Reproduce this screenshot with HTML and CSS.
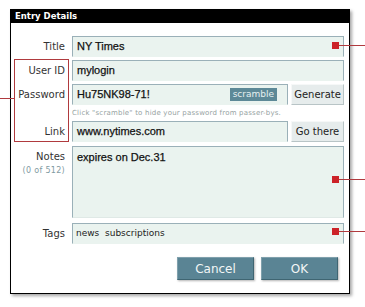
FILE: index.html
```html
<!DOCTYPE html>
<html lang="en">
<head>
    <meta charset="UTF-8">
    <title>Entry Details</title>
    <link rel="stylesheet" href="styles.css">
</head>
<body>
    <div class="stage">
        <div class="dialog">
            <div class="titlebar">Entry Details</div>
            <div class="form">
                <div class="row">
                    <label>Title</label>
                    <div class="field strong">NY Times</div>
                </div>
                <div class="row">
                    <label>User ID</label>
                    <div class="field strong">mylogin</div>
                </div>
                <div class="row">
                    <label>Password</label>
                    <div class="field strong pass">
                        <span>Hu75NK98-71!</span>
                        <span class="scramble">scramble</span>
                    </div>
                    <button class="small-btn">Generate</button>
                </div>
                <div class="hint">Click "scramble" to hide your password from passer-bys.</div>
                <div class="row link-row">
                    <label>Link</label>
                    <div class="field strong">www.nytimes.com</div>
                    <button class="small-btn">Go there</button>
                </div>
                <div class="row notes-row">
                    <label>Notes<small>(0 of 512)</small></label>
                    <div class="field strong notes">expires on Dec.31</div>
                </div>
                <div class="row tags-row">
                    <label>Tags</label>
                    <div class="field tags">news &nbsp;subscriptions</div>
                </div>
                <div class="actions">
                    <button class="big-btn">Cancel</button>
                    <button class="big-btn">OK</button>
                </div>
            </div>
        </div>

        <!-- anotaciones rojas -->
        <div class="bracket"></div>
        <div class="bracket-line"></div>
        <div class="marker" style="top: 42px"></div>
        <div class="marker" style="top: 176px"></div>
        <div class="marker" style="top: 228px"></div>
    </div>
</body>
</html>
```

FILE: styles.css
```css
body {
    margin: 0;
    padding: 0;
    background-color: #ffffff;
    font-family: "Liberation Sans", Arial, sans-serif;
}

.stage {
    position: relative;
    width: 365px;
    height: 307px;
    overflow: hidden;
    padding-top: 9px;
    box-sizing: border-box;
}

.dialog {
    margin-left: 10px;
    width: 340px;
    border: 1px solid #000;
    border-top: none;
    box-sizing: border-box;
    background-color: #fff;
    box-shadow: 2px 2px 3px rgba(0, 0, 0, 0.35);
}

.titlebar {
    background-color: #000;
    color: #fff;
    font-family: "DejaVu Sans", Verdana, sans-serif;
    font-weight: bold;
    font-size: 8.5px;
    height: 14px;
    line-height: 14px;
    padding-left: 4px;
}

.form {
    padding: 13px 5px 13px 0;
}

.row {
    display: flex;
    gap: 3px;
    height: 21px;
    margin-bottom: 3px;
}

.row label {
    width: 54px;
    margin-right: 4px;
    text-align: right;
    font-family: "DejaVu Sans", Verdana, sans-serif;
    font-size: 10px;
    color: #333;
    line-height: 21px;
    flex-shrink: 0;
}

.field {
    flex: 1;
    background-color: #eaf3ef;
    border: 1px solid #9ab0b8;
    border-bottom-color: #eaf3ef;
    box-sizing: border-box;
    padding: 0 4px;
    font-size: 11px;
    line-height: 19px;
    color: #222;
    white-space: nowrap;
}

/* texto del usuario algo mas oscuro */
.strong {
    color: #111;
    -webkit-text-stroke: 0.25px #111;
}

.pass {
    display: flex;
    justify-content: space-between;
    align-items: center;
    padding-right: 10px;
}

.scramble {
    background-color: #5d8997;
    color: #e6f0f0;
    font-family: "DejaVu Sans", Verdana, sans-serif;
    font-size: 9px;
    line-height: 13px;
    padding: 0 3px;
    -webkit-text-stroke: 0;
}

.small-btn {
    width: 53px;
    height: 21px;
    flex-shrink: 0;
    padding: 0;
    background-color: #e6ecec;
    border: 1px solid #f6f8f8;
    border-right-color: #b8c4c6;
    border-bottom-color: #b8c4c6;
    font-family: "DejaVu Sans", Verdana, sans-serif;
    font-size: 10px;
    color: #222;
}

.hint {
    margin: -2px 0 0 61px;
    height: 14px;
    line-height: 14px;
    font-family: "DejaVu Sans", Verdana, sans-serif;
    font-size: 7px;
    color: #96a2a2;
    letter-spacing: 0.2px;
}

.link-row {
    margin-top: 1px;
    margin-bottom: 4px;
}

.notes-row {
    height: 72px;
    margin-bottom: 5px;
}

.notes-row label {
    line-height: 12px;
    padding-top: 5px;
}

.notes-row small {
    display: block;
    font-size: 8px;
    color: #7f9aa2;
    margin-top: 2px;
    letter-spacing: 0.3px;
}

.notes {
    line-height: 18px;
    padding-top: 1px;
    border-bottom-color: #dfe9e6;
}

.tags {
    font-size: 9px;
    font-family: "DejaVu Sans", Verdana, sans-serif;
    padding-left: 3px;
}

.actions {
    display: flex;
    justify-content: flex-end;
    gap: 7px;
    margin-top: 13px;
    padding-right: 6px;
}

.big-btn {
    width: 77px;
    height: 23px;
    padding: 0;
    background-color: #5a8494;
    border: 1px solid #7fa0ac;
    border-right-color: #3f6572;
    border-bottom-color: #3f6572;
    color: #f2f6f6;
    font-family: "DejaVu Sans", Verdana, sans-serif;
    font-size: 12px;
    box-shadow: 1px 1px 2px rgba(0, 0, 0, 0.3);
}

.bracket {
    position: absolute;
    left: 14px;
    top: 59px;
    width: 55px;
    height: 83px;
    border: 1px solid #b03a3e;
    box-sizing: border-box;
}

.bracket-line {
    position: absolute;
    left: 0;
    top: 98px;
    width: 14px;
    height: 1px;
    background-color: #b03a3e;
}

.marker {
    position: absolute;
    left: 332px;
    width: 7px;
    height: 7px;
    background-color: #cc2228;
}

.marker::after {
    content: "";
    position: absolute;
    left: 7px;
    top: 3px;
    width: 30px;
    height: 1px;
    background-color: #b03a3e;
}
```
